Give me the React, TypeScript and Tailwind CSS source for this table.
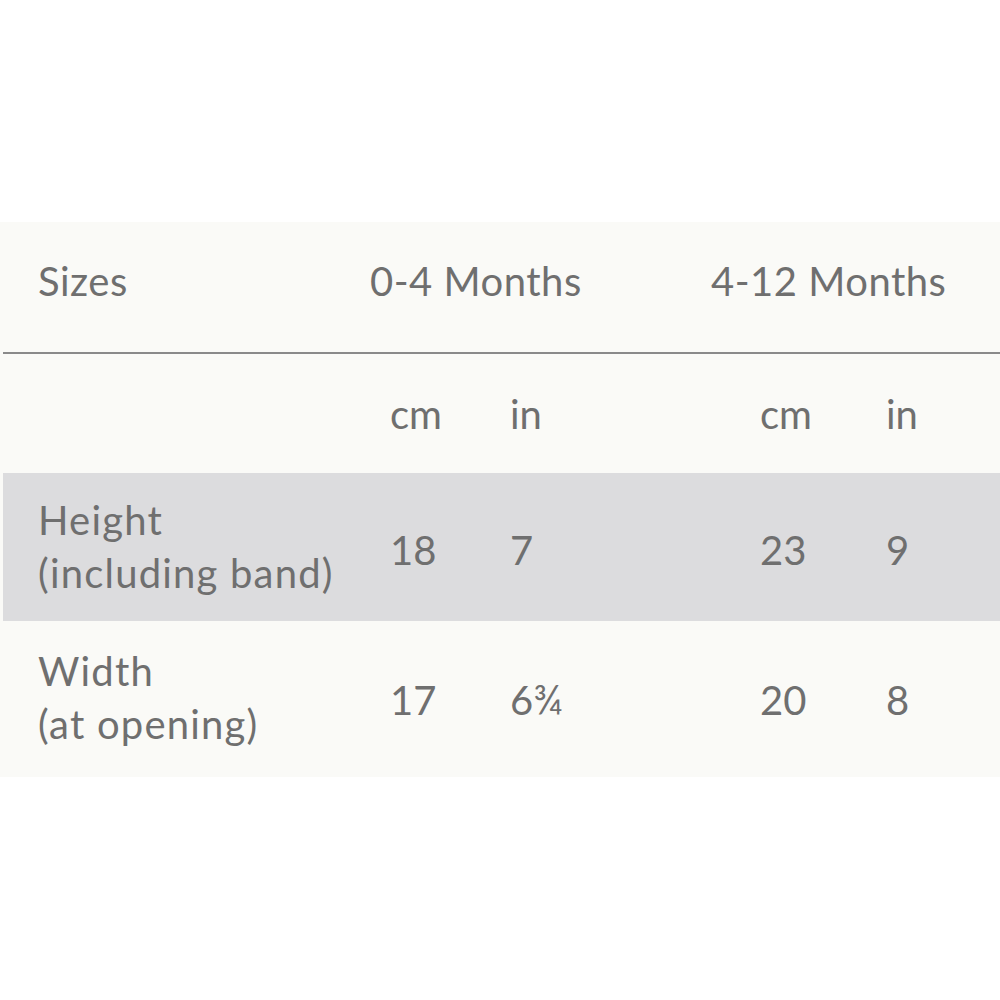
import React from "react";

const font = { fontFamily: "Lato, 'Open Sans', sans-serif" };

export default function App() {
  return (
    <div className="w-[1000px] h-[1000px] bg-white pt-[222px] text-[#6f6f6f] text-[40px] leading-[48px]" style={font}>
      <div className="bg-[#fafaf7] h-[555px] flex flex-col">
        {/* header */}
        <div className="h-[130px] pt-[35px] pl-[38px] flex tracking-[0.5px]">
          <div className="w-[332px]">Sizes</div>
          <div className="w-[341px]">0-4 Months</div>
          <div>4-12 Months</div>
        </div>
        <div className="h-[2px] ml-[3px] bg-[#8a8a8a]" />
        {/* units */}
        <div className="h-[119px] pt-[36px] pl-[38px] grid grid-cols-[352px_120px_250px_126px_1fr]">
          <div />
          <div>cm</div>
          <div>in</div>
          <div>cm</div>
          <div>in</div>
        </div>
        {/* height */}
        <div className="h-[148px] ml-[3px] pl-[35px] bg-[#dcdcde] grid grid-cols-[352px_120px_250px_126px_1fr]">
          <div className="pt-[21px] leading-[53px] whitespace-nowrap tracking-[1.2px]">
            <div>Height</div>
            <div>(including band)</div>
          </div>
          <div className="pt-[53px]">18</div>
          <div className="pt-[53px]">7</div>
          <div className="pt-[53px]">23</div>
          <div className="pt-[53px]">9</div>
        </div>
        {/* width */}
        <div className="h-[156px] pl-[38px] grid grid-cols-[352px_120px_250px_126px_1fr]">
          <div className="pt-[24px] leading-[53px] whitespace-nowrap tracking-[1.2px]">
            <div>Width</div>
            <div>(at opening)</div>
          </div>
          <div className="pt-[55px]">17</div>
          <div className="pt-[55px]">6¾</div>
          <div className="pt-[55px]">20</div>
          <div className="pt-[55px]">8</div>
        </div>
      </div>
    </div>
  );
}
